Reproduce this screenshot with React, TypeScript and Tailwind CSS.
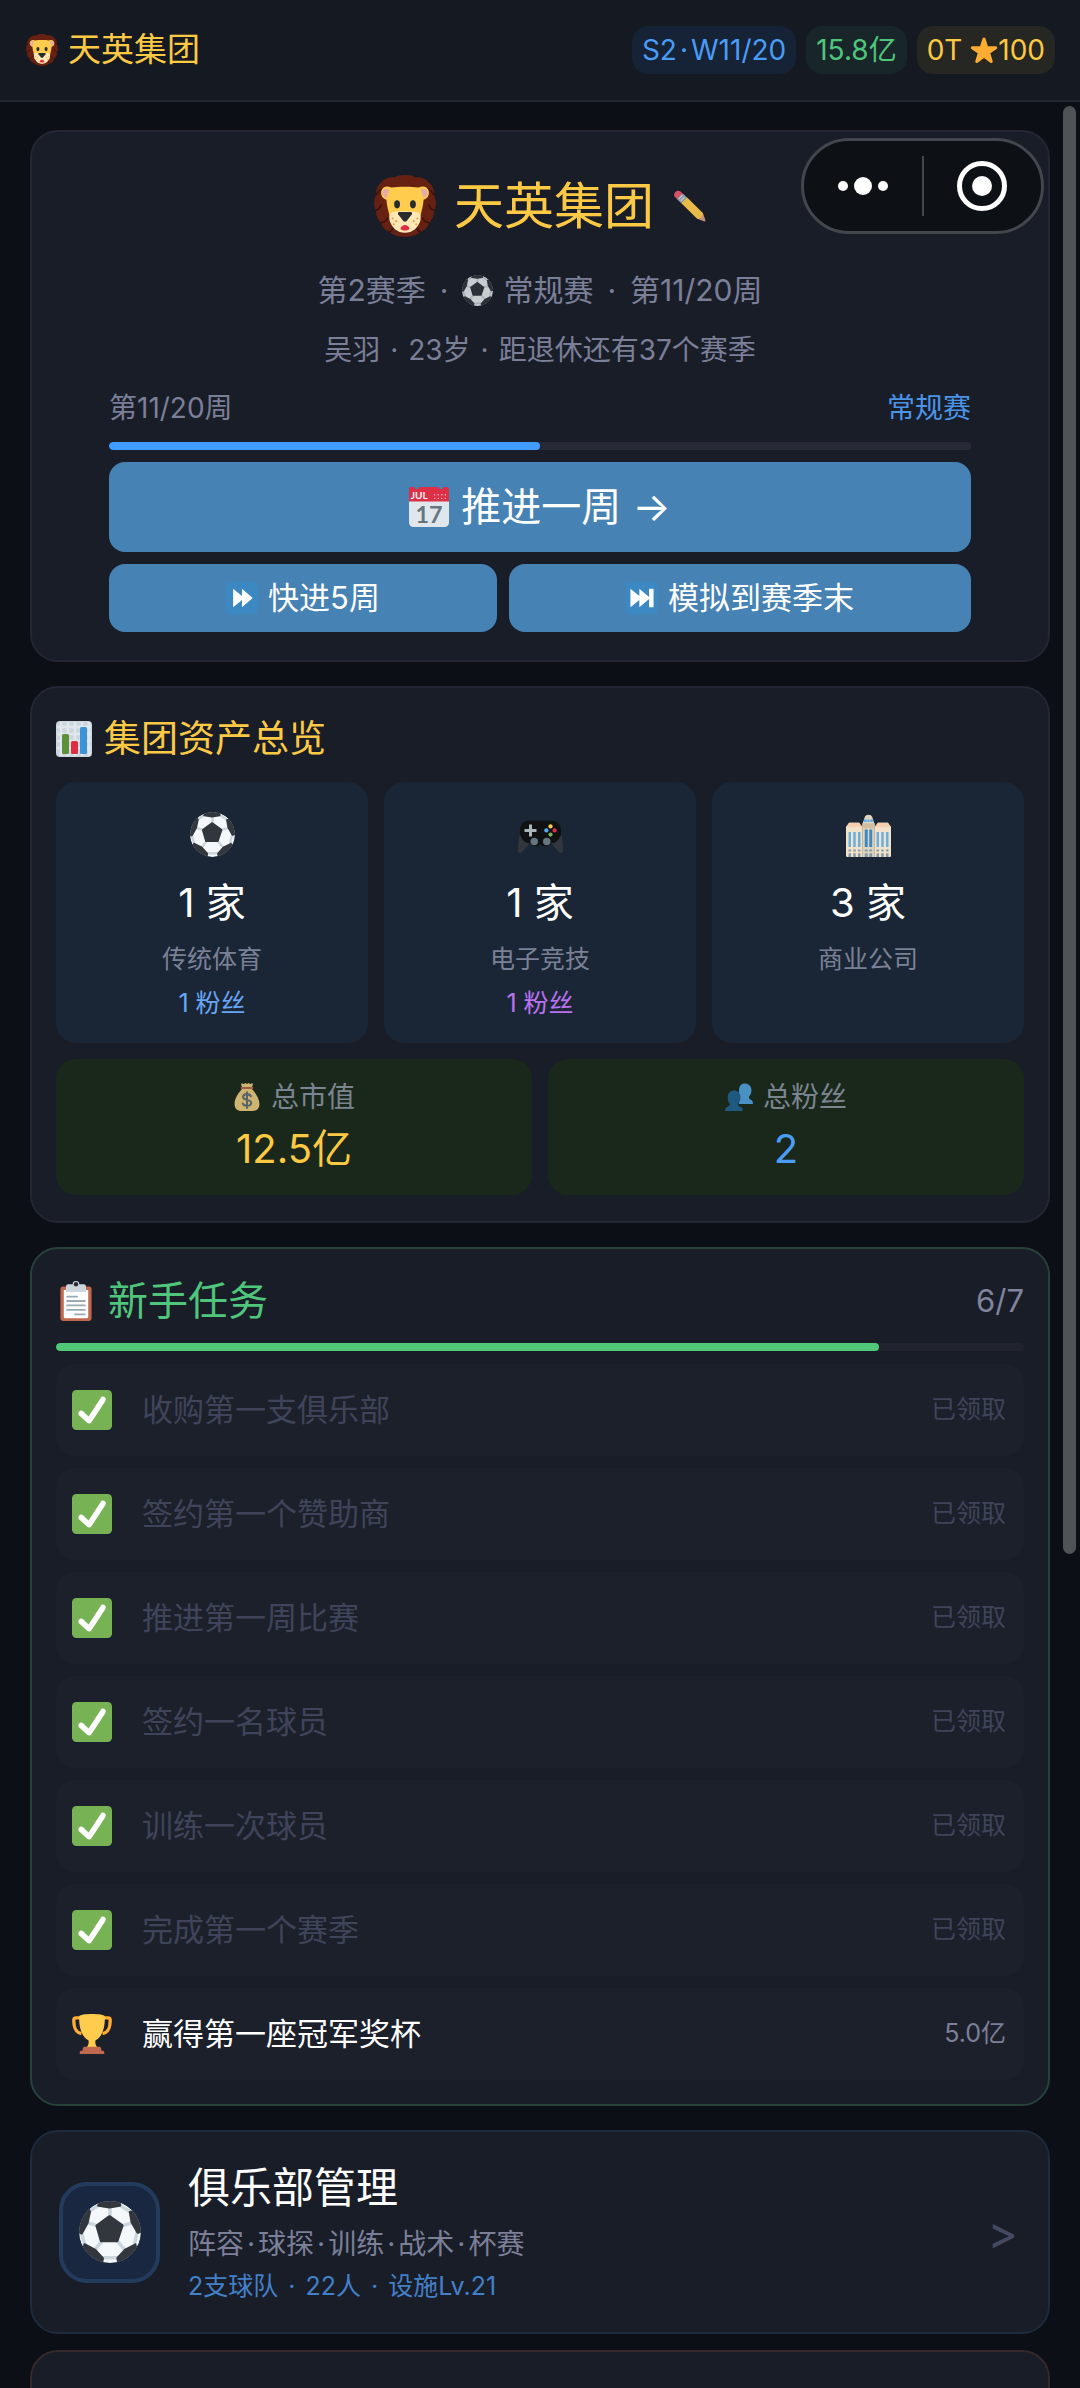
import React, { Fragment, useId } from 'react';
import clsx from 'clsx';

type IconProps = { className?: string };

/* ---------- Icons ---------- */

const LionIcon = ({ className }: IconProps) => (
  <svg viewBox="0 0 36 36" className={className} aria-hidden="true">
    <path
      fill="#662113"
      d="M18 0c-2.500 0-4.500.4-6 1.400C9 1 6 2 4.300 4.200 2 6 .8 9 1.200 11.500-.2 14.500-.3 18 1.100 20.500c-.1 3 1.200 5.600 3 7.300.7 2.600 2.700 4.400 5 5.200C11 35 15 36 18 36s7-1 8.900-3c2.300-.8 4.300-2.600 5-5.200 1.800-1.700 3.100-4.300 3-7.300 1.400-2.500 1.300-6-.1-9 .4-2.500-.8-5.500-3.100-7.300C30 2 27 1 24 1.400 22.500.4 20.500 0 18 0z"
    />
    <path
      fill="none"
      stroke="#3f130b"
      strokeWidth="1"
      strokeLinecap="round"
      d="M1.300 11.500C2.500 9.500 3.500 8.500 5 8M34.700 11.500C33.500 9.500 32.500 8.500 31 8M1.200 20.500c1.500-.5 2.500-1.500 3-3M34.800 20.500c-1.500-.5-2.500-1.500-3-3M4.200 27.700c1.500-.2 2.800-1 3.500-2.500M31.800 27.700c-1.500-.2-2.800-1-3.500-2.500M9.300 33c.8-.5 1.500-1.400 1.700-2.500M26.700 33c-.8-.5-1.500-1.400-1.700-2.500"
    />
    <path
      fill="#FFCC4D"
      d="M4.200 9.500C4.600 7 7.500 6 10 7.300 12.500 6.900 15 6.800 18 6.800s5.500.1 8 .5c2.500-1.300 5.400-.3 5.800 2.200.4 2.400-.9 4.300-3 4.900-.2 3.300-1 5.600-1.500 8.100-.8 5.500-4.300 10.700-9.300 10.700S9.500 28 8.700 22.500c-.5-2.500-1.300-4.800-1.500-8.100-2.100-.6-3.400-2.500-3-4.900z"
    />
    <path
      fill="#E6AAAA"
      d="M5 9.800c.3-1.600 2-2.300 3.800-1.500-.2 1.600-.9 3-1.500 5-1.600-.4-2.600-1.900-2.300-3.500zM31 9.800c-.3-1.600-2-2.300-3.800-1.500.2 1.600.9 3 1.500 5 1.600-.4 2.600-1.900 2.300-3.500z"
    />
    <path fill="#FFE8B6" d="M10.500 21.500c2.500 0 4.500-.4 7.500-.4s5 .4 7.500.4c1.600 1.300 1.900 3.500 1.300 5.300C25.500 30.500 22.500 33.500 18 33.500s-7.500-3-8.800-6.700c-.6-1.800-.3-4 1.300-5.300z" />
    <ellipse fill="#272B2B" cx="13.400" cy="17" rx="1.700" ry="2.400" />
    <ellipse fill="#272B2B" cx="22.600" cy="17" rx="1.700" ry="2.400" />
    <path fill="#272B2B" d="M14.700 21.500h6.600c.7 0 1 .6.700 1.300l-2.900 3.700c-.6.700-1.600.7-2.200 0L14 22.800c-.3-.7 0-1.300.7-1.300z" />
    <path fill="#DD2E44" d="M15.300 31c.5-1.200 1.600-2 2.700-2s2.200.8 2.700 2c-.5.800-1.500 1.200-2.700 1.200s-2.200-.4-2.700-1.200z" />
    <g fill="#E39F3D">
      <circle cx="10.800" cy="25.300" r=".6" />
      <circle cx="12.900" cy="26.800" r=".6" />
      <circle cx="11.500" cy="28.600" r=".6" />
      <circle cx="25.200" cy="25.300" r=".6" />
      <circle cx="23.100" cy="26.800" r=".6" />
      <circle cx="24.500" cy="28.600" r=".6" />
    </g>
  </svg>
);

const BallIcon = ({ className }: IconProps) => {
  const clip = useId();
  return (
    <svg viewBox="0 0 36 36" className={className} aria-hidden="true">
      <clipPath id={clip}>
        <circle cx="18" cy="18" r="18" />
      </clipPath>
      <g clipPath={`url(#${clip})`}>
        <circle cx="18" cy="18" r="18" fill="#F5F8FA" />
        <path
          stroke="#CCD6DD"
          strokeWidth="2"
          fill="none"
          d="M18 3v8M11 14.500L3 12M25 14.500l8-2.500M22 23l6 7M13.500 23L8 30M3.500 26L1 17M12 33h11M32 26l2-9M31 7l-8-5M5.500 6.500L12 2"
        />
        <path
          fill="#31373D"
          d="M25.500 13.500l-7.200-5.100c-.4-.2-.8-.2-1.200 0L10 13.600c-.4.200-.5.700-.4 1.100l2.500 8.600c.1.400.5.700 1 .7H22c.4 0 .8-.3.900-.7l2.900-8.600c.2-.4 0-.9-.3-1.200zM1.300 19.500c.4 0 .7-.2.900-.5l3.300-6c.1-.1.100-.2.100-.3L7 6.200 6 4H4l-5 8v6.500l2.300 1zM10.600 3c.1.200.3.400.6.400l6.300 1h.3l6.100-1c.4-.1.700-.5.600-.9L24 0 18-1 12 0l-1.400 2.300c-.1.200-.1.500 0 .7zM31 5.500l-1.400.1c-.5.100-.8.500-.7.900L30 12.700l3.500 6c.2.300.5.400.9.300L37 18l-1-9zM14.500 33.400c0-.2 0-.4-.2-.6l-4.500-5-6.300-3.200c-.4-.2-.9.100-1 .5L2 29l6 7h6zM33.300 24.800c-.2-.2-.5-.3-.8-.1l-6.200 3.100-4.400 4.900c-.2.200-.2.400-.2.600l.5 2.700h6l6-7z"
        />
      </g>
    </svg>
  );
};

const StarIcon = ({ className }: IconProps) => (
  <svg viewBox="0 0 36 36" className={className} aria-hidden="true">
    <path
      fill="#FFAC33"
      d="M27.287 34.627c-.404 0-.806-.124-1.152-.371L18 28.422l-8.135 5.834c-.343.247-.744.371-1.147.371-.405 0-.811-.126-1.157-.377-.688-.498-.976-1.380-.717-2.188l3.034-9.792-8.062-5.681c-.685-.505-.970-1.388-.708-2.196.264-.810 1.017-1.357 1.869-1.361l9.947-.008L16.140 3.270c.274-.804 1.010-1.300 1.860-1.300s1.586.496 1.859 1.300L23 13.024l10.022.008c.853.004 1.606.551 1.869 1.361.264.808-.022 1.691-.709 2.196l-8.062 5.681 3.034 9.792c.260.808-.028 1.690-.717 2.188-.345.251-.751.377-1.150.377z"
    />
  </svg>
);

const PencilIcon = ({ className }: IconProps) => (
  <svg viewBox="0 0 36 36" className={className} aria-hidden="true">
    <path fill="#D99E82" d="M35.200 33.500c.5 1.400-.4 2.200-1.700 1.700l-7.500-2.800 6.500-6.500z" />
    <path fill="#EA596E" d="M1.500 8.500c-2-2-1.800-4.300 0-6.200s4.300-2.100 6.200-.2l2.400 2.400-6.200 6.300z" />
    <path fill="#FFCC4D" d="M26 32.400L8 14.500l6.500-6.400 18 17.800c.6 3.300-3 6.900-6.500 6.500z" />
    <path fill="#99AAB5" d="M3.500 10.300L10 3.900l4.600 4.500L8 14.900z" />
    <path fill="#CCD6DD" d="M4.800 9.200L9 5.100l1.200 1.200L6 10.400zM7.200 11.600l4.200-4.100 1.200 1.200-4.200 4.100z" />
  </svg>
);

const CalendarIcon = ({ className }: IconProps) => (
  <svg viewBox="0 0 36 36" className={className} aria-hidden="true">
    <path fill="#E0E7EC" d="M0 10h36v22a4 4 0 0 1-4 4H4a4 4 0 0 1-4-4z" />
    <path fill="#DD2F45" d="M0 2a2 2 0 0 1 2-2h3a2 2 0 0 0 4 0h18a2 2 0 0 0 4 0h3a2 2 0 0 1 2 2v11H0z" />
    <text x="1.500" y="11" fontSize="9" fontWeight="700" fill="#F5F8FA" fontFamily="Lato, sans-serif">
      JUL
    </text>
    <path stroke="#F4ABBA" strokeWidth="1.200" strokeDasharray="1.200 2" fill="none" d="M22.500 7H35M22.500 10.200H35" />
    <text x="18" y="32" fontSize="21" fontWeight="700" textAnchor="middle" fill="#66757F" fontFamily="Lato, sans-serif">
      17
    </text>
  </svg>
);

const ForwardIcon = ({ className }: IconProps) => (
  <svg viewBox="0 0 36 36" className={className} aria-hidden="true">
    <rect width="36" height="36" rx="4" fill="#3B88C3" />
    <path fill="#fff" d="M8 7.500l10 8.300V7.500L30 18 18 28.500v-8.300L8 28.500z" />
  </svg>
);

const SkipIcon = ({ className }: IconProps) => (
  <svg viewBox="0 0 36 36" className={className} aria-hidden="true">
    <rect width="36" height="36" rx="4" fill="#3B88C3" />
    <path fill="#fff" d="M5 7.500l10 8.300V7.500L26 17V7.500h5v21h-5V19l-11 9.500v-8.300L5 28.500z" />
  </svg>
);

const ChartIcon = ({ className }: IconProps) => (
  <svg viewBox="0 0 36 36" className={className} aria-hidden="true">
    <rect width="36" height="36" rx="4" fill="#CCD6DD" />
    <path stroke="#E1E8ED" strokeWidth="2.500" d="M5 1v34M12 1v34M19 1v34M26 1v34M33 1v34M1 6h34M1 13h34M1 20h34M1 27h34" />
    <rect x="6" y="13" width="7" height="20" rx="1.500" fill="#5C913B" />
    <rect x="15" y="20" width="7" height="13" rx="1.500" fill="#DD2E44" />
    <rect x="24" y="6" width="7" height="27" rx="1.500" fill="#3B94D9" />
  </svg>
);

const GamepadIcon = ({ className }: IconProps) => (
  <svg viewBox="0 0 36 36" className={className} aria-hidden="true">
    <path fill="#31373D" d="M1 19l10 4c-3 3.500-5.500 7-8.500 9.500C.5 33 0 32 0 30.500c0-4 .3-8 1-11.500zM35 19l-10 4c3 3.500 5.500 7 8.500 9.500 2 .5 2.500-.5 2.500-2 0-4-.3-8-1-11.500z" />
    <path fill="#0F1113" d="M9 7h18c4.500 0 7.500 3.500 7.500 8.500S31 25 26.500 25c-1.500 2.500-6 3.500-8.500.5-2.500 3-7 2-8.500-.5C5 25 1.500 20.500 1.500 15.500S4.500 7 9 7z" />
    <path stroke="#AAB4BB" strokeWidth="2.400" d="M10 10v9.500M5.200 14.700h9.600" />
    <circle cx="13" cy="23.500" r="3" fill="#66757F" />
    <circle cx="23" cy="23.500" r="3" fill="#66757F" />
    <circle cx="26" cy="11.500" r="1.700" fill="#FFCC4D" />
    <circle cx="29.300" cy="14.700" r="1.700" fill="#DD2E44" />
    <circle cx="22.700" cy="14.700" r="1.700" fill="#55ACEE" />
    <circle cx="26" cy="18" r="1.700" fill="#77B255" />
  </svg>
);

const BuildingsIcon = ({ className }: IconProps) => (
  <svg viewBox="0 0 36 36" className={className} aria-hidden="true">
    <path fill="#F3E2CB" d="M0 12l2.500-3.500h8L13 12v24H1a1 1 0 0 1-1-1zM36 12l-2.500-3.500h-8L23 12v24h12a1 1 0 0 0 1-1z" />
    <path fill="#F5CFAE" d="M0 12l2.500-3.500h8L13 12zM36 12l-2.500-3.500h-8L23 12z" />
    <path fill="#E0D5BE" d="M13 10l2-6c1-2.500 5-2.500 6 0l2 6v26H13z" />
    <path fill="#D1BEA0" d="M13 9h10v4H13z" />
    <path fill="#55ACEE" d="M14.500 6h2v2h-2zM17.100 6h1.800v2h-1.800zM19.500 6h2v2h-2z" />
    <path fill="#6AB0DE" d="M2 16h2v12H2zM5.800 16h2v12h-2zM9.600 16h2v12h-2zM24.400 16h2v12h-2zM28.200 16h2v12h-2zM32 16h2v12h-2z" />
    <path fill="#4289C1" d="M15 14h2.400v14H15zM18.600 14H21v14h-2.400z" />
    <path fill="#8899A6" d="M2 30h2v1.500H2zM5.800 30h2v1.500h-2zM9.600 30h2v1.500h-2zM15 30h2.400v1.500H15zM18.600 30H21v1.500h-2.400zM24.400 30h2v1.500h-2zM28.200 30h2v1.500h-2zM32 30h2v1.500h-2zM2 33h2v3H2zM5.800 33h2v3h-2zM9.600 33h2v3h-2zM15 33h2.400v3H15zM18.600 33H21v3h-2.400zM24.400 33h2v3h-2zM28.200 33h2v3h-2zM32 33h2v3h-2z" />
  </svg>
);

const MoneyBagIcon = ({ className }: IconProps) => (
  <svg viewBox="0 0 36 36" className={className} aria-hidden="true">
    <path fill="#FDD888" d="M12 7.500l-1.500-6C10.300.6 11 0 12 .5l2 .7 2-1.200 2 1.200L20 0l2 1.200 2-.7c1-.5 1.700.1 1.500 1l-1.500 6c5 5 10 12.500 10 19.500 0 6-3.500 9-9 9H11c-5.500 0-9-3-9-9 0-7 5-14.500 10-19.500z" />
    <path fill="#BF6952" d="M11 5.200h14c.8 0 1.200.6 1.200 1.200S25.800 7.700 25 7.700H11c-.8 0-1.200-.7-1.200-1.300S10.200 5.200 11 5.200z" />
    <path
      fill="none"
      stroke="#67757F"
      strokeWidth="2.600"
      strokeLinecap="round"
      d="M23 17c-.8-1.800-2.600-2.700-5-2.700-3 0-5 1.500-5 3.700 0 5.200 10.400 2.200 10.400 7.500 0 2.400-2.200 3.900-5.200 3.900-2.700 0-4.700-1-5.600-3M18 12v20"
    />
  </svg>
);

const PeopleIcon = ({ className }: IconProps) => (
  <svg viewBox="0 0 36 36" className={className} aria-hidden="true">
    <path fill="#55ACEE" d="M18 9c0-5 3-8.500 7.500-8.500S34 4 34 9c0 4-1.300 6.500-3 8.500-.6 2.500.5 3.500 2.500 4.200 1.800.8 2.500 2.300 2.500 5.300H18z" />
    <path fill="#269" d="M3.500 18c0-5 3.200-8.500 8-8.500s8.500 3.500 8.500 8.500c0 4-1.300 6.500-3 8.500-.6 2.200.5 3.200 2.500 4 2.300.8 3.300 2.500 3.500 5.500H0c.2-3 1.200-4.700 3.500-5.500 2-.8 3-1.800 2.500-4-1.700-2-2.500-4.500-2.500-8.500z" />
  </svg>
);

const ClipboardIcon = ({ className }: IconProps) => (
  <svg viewBox="0 0 36 36" className={className} aria-hidden="true">
    <rect x="4" y="5" width="28" height="31" rx="2.500" fill="#C1694F" />
    <path fill="#fff" d="M7 8h22v24.500a1 1 0 0 1-1 1H8a1 1 0 0 1-1-1z" />
    <path fill="#CCD6DD" d="M25 3h-4a3 3 0 0 0-6 0h-4a2 2 0 0 0-2 2v5h18V5a2 2 0 0 0-2-2z" />
    <circle cx="18" cy="3" r="2" fill="#292F33" />
    <path stroke="#99AAB5" strokeWidth="1.600" strokeLinecap="round" d="M10 14h9M10 18h16M10 22h16M10 26h16M17 30h9" />
  </svg>
);

const CheckIcon = ({ className }: IconProps) => (
  <svg viewBox="0 0 36 36" className={className} aria-hidden="true">
    <rect width="36" height="36" rx="4" fill="#77B255" />
    <path
      fill="#fff"
      d="M29.280 6.362c-1.156-.751-2.704-.422-3.458.736L14.936 23.877l-5.029-4.650c-1.014-.938-2.596-.875-3.533.138-.937 1.014-.875 2.596.139 3.533l7.209 6.666c.480.445 1.090.665 1.696.665.673 0 1.534-.282 2.099-1.139.332-.506 12.500-19.270 12.500-19.270.751-1.159.421-2.707-.737-3.458z"
    />
  </svg>
);

const TrophyIcon = ({ className }: IconProps) => (
  <svg viewBox="0 0 36 36" className={className} aria-hidden="true">
    <path fill="none" stroke="#FFAC33" strokeWidth="3" d="M8 3.500H3.500c-1.200 0-1.900.7-1.900 2 0 6 .9 11 6.900 12.200M28 3.500h4.500c1.200 0 1.900.7 1.900 2 0 6-.9 11-6.900 12.200" />
    <path fill="#FFCC4D" d="M6.500 2C7 .7 12 0 18 0s11 .7 11.500 2c.5 9-2 18.500-8.300 21.700-.7 3 .4 5.300 2.300 6.800h-11c1.900-1.500 3-3.800 2.300-6.800C8.500 20.500 6 11 6.500 2z" />
    <path fill="#C1694F" d="M11 29.500h14c.8 0 1.300 1.500 1.600 3.500h1.400c.6 0 1 .5 1 1.200V36H7v-1.800c0-.7.4-1.200 1-1.200h1.400c.3-2 .8-3.500 1.600-3.500z" />
  </svg>
);

/* ---------- Data ---------- */

const assets = [
  { name: '传统体育', count: '1 家', icon: BallIcon, fans: '1 粉丝', fansColor: 'text-[#68a5f5]' },
  { name: '电子竞技', count: '1 家', icon: GamepadIcon, fans: '1 粉丝', fansColor: 'text-[#b872f0]' },
  { name: '商业公司', count: '3 家', icon: BuildingsIcon },
];

const totals = [
  { name: '总市值', value: '12.5亿', icon: MoneyBagIcon, color: 'text-[#fcc944]' },
  { name: '总粉丝', value: '2', icon: PeopleIcon, color: 'text-[#4a9cf5]' },
];

const tasks = [
  { name: '收购第一支俱乐部', reward: '已领取', done: true },
  { name: '签约第一个赞助商', reward: '已领取', done: true },
  { name: '推进第一周比赛', reward: '已领取', done: true },
  { name: '签约一名球员', reward: '已领取', done: true },
  { name: '训练一次球员', reward: '已领取', done: true },
  { name: '完成第一个赛季', reward: '已领取', done: true },
  { name: '赢得第一座冠军奖杯', reward: '5.0亿', done: false },
];

/* ---------- Shared pieces ---------- */

const Card = ({ className, children }: { className?: string; children?: React.ReactNode }) => (
  <section className={clsx('rounded-[28px] border-2 bg-[#191d28]', className)}>{children}</section>
);

// Items separated by middle dots; the gap class sets the air around each dot
const DotList = ({ items, className }: { items: React.ReactNode[]; className?: string }) => (
  <span className={clsx('flex items-center', className)}>
    {items.map((item, i) => (
      <Fragment key={i}>
        {i > 0 && <span>·</span>}
        <span className="flex items-center gap-2.5">{item}</span>
      </Fragment>
    ))}
  </span>
);

const ProgressBar = ({ value, label, className, fill }: { value: number; label: string; className?: string; fill: string }) => (
  <div
    role="progressbar"
    aria-label={label}
    aria-valuenow={value}
    className={clsx('h-2 overflow-hidden rounded-full', className)}
  >
    <div className={clsx('h-full rounded-full', fill)} style={{ width: `${value}%` }} />
  </div>
);

const Header = () => (
  <header className="flex h-[102px] shrink-0 items-center justify-between border-b-2 border-[#232731] bg-[#151922] pl-[26px] pr-[25px]">
    <div className="flex items-center gap-2.5">
      <LionIcon className="size-8" />
      <span className="text-[33px] text-[#fcc944]">天英集团</span>
    </div>
    <div className="flex items-center gap-2.5 text-[28px] leading-[48px]">
      <DotList items={['S2', 'W11/20']} className="gap-[3px] rounded-2xl bg-[#162235] px-2.5 text-[#4a9cf5]" />
      <span className="rounded-2xl bg-[#182529] px-2.5 text-[#50c57c]">15.8亿</span>
      <span className="flex items-center rounded-2xl bg-[#262622] px-2.5 text-[#fcc944]">
        0T&nbsp;
        <StarIcon className="size-7" />
        100
      </span>
    </div>
  </header>
);

// Floating mini-program controls
const Capsule = () => (
  <div className="absolute right-9 top-[138px] flex h-24 w-[243px] items-center rounded-full border-[3px] border-[#43464c] bg-[#0d1015]">
    <button type="button" aria-label="更多" className="flex h-full flex-1 items-center justify-center gap-1.5">
      <span className="size-2.5 rounded-full bg-white" />
      <span className="size-[18px] rounded-full bg-white" />
      <span className="size-2.5 rounded-full bg-white" />
    </button>
    <span className="h-[60px] w-0.5 bg-[#43464c]" />
    <button type="button" aria-label="关闭" className="flex h-full flex-1 items-center justify-center">
      <span className="flex size-[50px] items-center justify-center rounded-full border-[5px] border-white">
        <span className="size-5 rounded-full bg-white" />
      </span>
    </button>
  </div>
);

const SeasonCard = () => (
  <Card className="border-[#242733] px-[77px] pb-7 pt-[42px]">
    <div className="flex h-16 items-center justify-center">
      <LionIcon className="size-[62px]" />
      <h1 className="ml-[18px] text-[50px] leading-[64px] text-[#fcc944]">天英集团</h1>
      <button type="button" aria-label="修改名称" className="ml-5">
        <PencilIcon className="size-8 opacity-90" />
      </button>
    </div>
    <p className="mt-8 text-[30px] leading-10 text-[#7b7f98]">
      <DotList
        className="justify-center gap-3.5"
        items={[
          '第2赛季',
          <>
            <BallIcon className="size-[31px] opacity-80" />
            常规赛
          </>,
          '第11/20周',
        ]}
      />
    </p>
    <p className="mt-5 text-[28px] leading-10 text-[#7b7f98]">
      <DotList className="justify-center gap-2.5" items={['吴羽', '23岁', '距退休还有37个赛季']} />
    </p>
    <div className="mt-[18px] flex justify-between text-[28px] leading-10">
      <span className="text-[#7b7f98]">第11/20周</span>
      <span className="text-[#4a94e8]">常规赛</span>
    </div>
    <ProgressBar value={50} label="赛季进度" className="mt-3.5 bg-[#272a36]" fill="bg-[#409cff]" />
    <button
      type="button"
      className="mt-3 flex h-[90px] w-full items-center justify-center rounded-2xl bg-[#4682b4] text-[40px] text-white"
    >
      <CalendarIcon className="mr-3 size-10" />
      推进一周 →
    </button>
    <div className="mt-3 flex gap-3 text-[31px] text-white">
      <button type="button" className="flex h-[68px] flex-auto items-center justify-center gap-2.5 rounded-2xl bg-[#4682b4]">
        <ForwardIcon className="size-8" />
        快进5周
      </button>
      <button type="button" className="flex h-[68px] flex-auto items-center justify-center gap-2.5 rounded-2xl bg-[#4682b4]">
        <SkipIcon className="size-8" />
        模拟到赛季末
      </button>
    </div>
  </Card>
);

const AssetsCard = () => (
  <Card className="border-[#242733] px-6 pb-[26px] pt-6">
    <h2 className="flex items-center gap-3 text-[37px] leading-[54px] text-[#fcc944]">
      <ChartIcon className="size-9" />
      集团资产总览
    </h2>
    <div className="mt-4 grid grid-cols-3 gap-4">
      {assets.map((asset) => (
        <div key={asset.name} className="flex h-[261px] flex-col items-center rounded-[20px] bg-[#1a2635] pt-[30px]">
          <asset.icon className="size-[45px]" />
          <p className="mt-[18px] text-[40px] leading-[56px] text-white">{asset.count}</p>
          <p className="mt-2.5 text-[25px] leading-9 text-[#7a8197]">{asset.name}</p>
          {asset.fans && <p className={clsx('mt-2 text-[25px] leading-9', asset.fansColor)}>{asset.fans}</p>}
        </div>
      ))}
    </div>
    <div className="mt-4 grid grid-cols-2 gap-4">
      {totals.map((total) => (
        <div key={total.name} className="rounded-[20px] bg-[#1a281b] py-[18px] text-center">
          <p className="flex items-center justify-center gap-2.5 text-[28px] leading-10 text-[#7a8590]">
            <total.icon className="size-7 opacity-80" />
            {total.name}
          </p>
          <p className={clsx('mt-1 text-[40px] leading-[56px]', total.color)}>{total.value}</p>
        </div>
      ))}
    </div>
  </Card>
);

const TasksCard = () => (
  <Card className="border-[#27413b] p-6">
    <div className="flex items-center justify-between leading-[56px]">
      <h2 className="flex items-center gap-3 text-[40px] text-[#50c57c]">
        <ClipboardIcon className="size-10" />
        新手任务
      </h2>
      <span className="text-[31px] text-[#80849e]">6/7</span>
    </div>
    <ProgressBar value={85} label="任务进度" className="mt-3.5 bg-[#21242f]" fill="bg-[#50c878]" />
    <ul className="mt-[13px] flex flex-col gap-3">
      {tasks.map((task) => (
        <li key={task.name} className="flex h-[92px] items-center rounded-[20px] bg-[#1c202b] pl-4 pr-[18px]">
          {task.done ? <CheckIcon className="size-10" /> : <TrophyIcon className="size-10" />}
          <span className={clsx('ml-[30px] flex-1 text-[31px]', task.done ? 'text-[#40445a]' : 'text-white')}>
            {task.name}
          </span>
          <span className={clsx('text-[25px]', task.done ? 'text-[#40445a]' : 'text-[#7b7f98]')}>{task.reward}</span>
        </li>
      ))}
    </ul>
  </Card>
);

const ClubCard = () => (
  <Card className="border-[#1e2a3d]">
    <a href="#club" className="flex h-[200px] items-center pl-[27px] pr-[30px]">
      <span className="flex size-[101px] items-center justify-center rounded-[28px] border-4 border-[#233c5e] bg-[#1a2740]">
        <BallIcon className="size-[62px]" />
      </span>
      <span className="ml-7 flex flex-1 flex-col">
        <span className="text-[42px] leading-[56px] text-white">俱乐部管理</span>
        <DotList
          className="mt-2 gap-[3px] text-[28px] leading-10 text-[#7b7f98]"
          items={['阵容', '球探', '训练', '战术', '杯赛']}
        />
        <DotList
          className="mt-1 gap-2.5 text-[25px] leading-9 text-[#4380c8]"
          items={['2支球队', '22人', '设施Lv.21']}
        />
      </span>
      <span className="text-[46px] text-[#454961]">&gt;</span>
    </a>
  </Card>
);

export default function App() {
  return (
    <div
      lang="zh-CN"
      className="relative flex h-screen flex-col overflow-hidden bg-[#0c0f15] font-['Inter','Noto_Sans_CJK_SC',sans-serif]"
    >
      <Header />
      <main className="min-h-0 flex-1 overflow-hidden px-[30px] pt-7">
        <div className="flex flex-col gap-6">
          <SeasonCard />
          <AssetsCard />
          <TasksCard />
          <div className="flex flex-col gap-4">
            <ClubCard />
            <Card className="h-[204px] border-[#35292b]" />
          </div>
        </div>
      </main>
      <Capsule />
      {/* Scroll position */}
      <div className="absolute right-1 top-[106px] h-[1448px] w-[13px] rounded-full bg-[#505355]" />
    </div>
  );
}
